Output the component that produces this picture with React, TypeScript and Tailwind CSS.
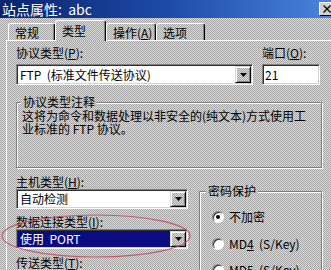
import type { ReactNode } from "react";

const dither =
  "bg-[image:repeating-conic-gradient(#d8d8d8_0%_25%,#a8a8a8_0%_50%)] bg-[length:2px_2px]";

function U({ children }: { children: ReactNode }) {
  return <span className="underline underline-offset-[1px]">{children}</span>;
}

function Arrow() {
  return (
    <svg width="7" height="4" viewBox="0 0 7 4">
      <path d="M0 0h7L3.5 4z" fill="#000" />
    </svg>
  );
}

function DropButton() {
  return (
    <div
      className={`flex w-[16px] shrink-0 items-center justify-center border border-t-[#dcdcdc] border-l-[#dcdcdc] border-r-black border-b-black shadow-[inset_1px_1px_0_#fff,inset_-1px_-1px_0_#808080] ${dither}`}
    >
      <Arrow />
    </div>
  );
}

function Combo({
  className,
  text,
  selected,
}: {
  className: string;
  text: string;
  selected?: boolean;
}) {
  return (
    <div
      className={`flex border border-[#808080] border-r-white border-b-white bg-white p-[1px] shadow-[inset_1px_1px_0_#303030,inset_-1px_-1px_0_#d4d4d4] ${className}`}
    >
      <div
        className={`flex flex-1 items-center pl-[2px] leading-[14px] whitespace-pre ${
          selected ? "bg-[#0c0c82] text-white" : ""
        }`}
      >
        {text}
      </div>
      <DropButton />
    </div>
  );
}

function Radio({ checked }: { checked?: boolean }) {
  return (
    <span className="flex h-[12px] w-[12px] shrink-0 items-center justify-center rounded-full border border-[#808080] border-r-white border-b-white bg-white shadow-[inset_1px_1px_0_#303030]">
      {checked && <span className="h-[4px] w-[4px] rounded-full bg-black" />}
    </span>
  );
}

function Tab({
  label,
  className,
  active,
}: {
  label: ReactNode;
  className: string;
  active?: boolean;
}) {
  return (
    <div
      className={`flex shrink-0 items-start rounded-t-[3px] border-l border-t border-white pl-[6px] shadow-[inset_-1px_0_0_#808080] border-r border-r-black ${
        active ? `relative z-10 -mb-[1px] h-[21px] pt-[3px] ${dither}` : "h-[17px] pt-[2px]"
      } ${className}`}
    >
      <span className="leading-[14px]">{label}</span>
    </div>
  );
}

export default function App() {
  return (
    <div
      className={`relative h-[270px] w-[331px] overflow-hidden text-[12px] text-black font-['Noto_Sans_CJK_SC','Liberation_Sans',sans-serif] ${dither}`}
    >
      {/* title bar */}
      <div className="flex h-[18px] items-center justify-between bg-gradient-to-r from-[#0a246a] via-[#1d4aa8] to-[#4a84dc] pl-[2px]">
        <span className="whitespace-pre text-[14px] leading-[18px] text-white">站点属性:  abc</span>
        <div className="-mr-[4px] flex h-[14px] w-[16px] items-center justify-center border border-t-white border-l-white border-r-black border-b-black bg-[#d4d0c8] text-[12px] font-bold leading-none">
          ×
        </div>
      </div>

      {/* tabs */}
      <div className="flex h-[22px] items-end pl-[8px]">
        <Tab label="常规" className="w-[47px]" />
        <Tab label="类型" className="w-[51px]" active />
        <Tab
          label={
            <>
              操作(<U>A</U>)
            </>
          }
          className="w-[50px] pl-[2px]"
        />
        <Tab label="选项" className="w-[49px]" />
      </div>

      {/* panel */}
      <div className="ml-[6px] border-l border-t border-white pl-[9px] pt-[5px]">
        <div className="flex">
          <div className="flex w-[237px] flex-col">
            <span className="h-[14px] leading-[14px]">
              协议类型(<U>P</U>):
            </span>
            <Combo className="mt-[4px] h-[21px]" text="FTP  (标准文件传送协议)" />
          </div>
          <div className="ml-[9px] flex w-[58px] flex-col">
            <span className="h-[14px] leading-[14px]">
              端口(<U>O</U>):
            </span>
            <div className="mt-[4px] flex h-[21px] items-center border border-[#808080] border-r-white border-b-white bg-white pl-[2px] shadow-[inset_1px_1px_0_#303030,inset_-1px_-1px_0_#d4d4d4]">
              21
            </div>
          </div>
        </div>

        <fieldset className="mt-[10px] h-[73px] w-[306px] border border-[#808080] shadow-[1px_1px_0_#fff,inset_1px_1px_0_#fff]">
          <legend className={`ml-[4px] px-[2px] leading-[14px] ${dither}`}>协议类型注释</legend>
          <div className="pl-[5px] leading-[13px]">
            <div>这将为命令和数据处理以非安全的(纯文本)方式使用工</div>
            <div className="whitespace-pre">业标准的 FTP 协议。</div>
          </div>
        </fieldset>

        <div className="flex">
          <div className="flex w-[172px] flex-col">
            <span className="mt-[7px] h-[14px] leading-[14px]">
              主机类型(<U>H</U>):
            </span>
            <Combo className="h-[20px]" text="自动检测" />
            <span className="mt-[6px] h-[14px] leading-[14px]">
              数据连接类型(<U>I</U>):
            </span>
            <Combo className="h-[20px]" text="使用  PORT" selected />
            <span className="mt-[7px] h-[14px] leading-[14px]">
              传送类型(<U>T</U>):
            </span>
          </div>

          <fieldset className="ml-[11px] mt-[16px] h-[100px] w-[123px] border border-[#808080] shadow-[1px_1px_0_#fff,inset_1px_1px_0_#fff]">
            <legend className={`ml-[6px] px-[2px] leading-[14px] ${dither}`}>密码保护</legend>
            <div className="flex flex-col pl-[12px]">
              <div className="mt-[11px] flex h-[16px] items-center gap-[5px]">
                <Radio checked />
                <span>不加密</span>
              </div>
              <div className="mt-[11px] flex h-[16px] items-center gap-[5px]">
                <Radio />
                <span className="whitespace-pre">
                  MD<U>4</U>  (S/Key)
                </span>
              </div>
              <div className="mt-[10px] flex h-[16px] items-center gap-[5px]">
                <Radio />
                <span className="whitespace-pre">
                  MD<U>5</U>  (S/Key)
                </span>
              </div>
            </div>
          </fieldset>
        </div>
      </div>

      {/* red annotation ellipse */}
      <svg
        className="pointer-events-none absolute left-0 top-0"
        width="331"
        height="270"
        viewBox="0 0 331 270"
      >
        <ellipse
          cx="96"
          cy="236"
          rx="94"
          ry="21"
          fill="none"
          stroke="#c8465e"
          strokeOpacity="0.85"
          strokeWidth="1.2"
        />
      </svg>
    </div>
  );
}
